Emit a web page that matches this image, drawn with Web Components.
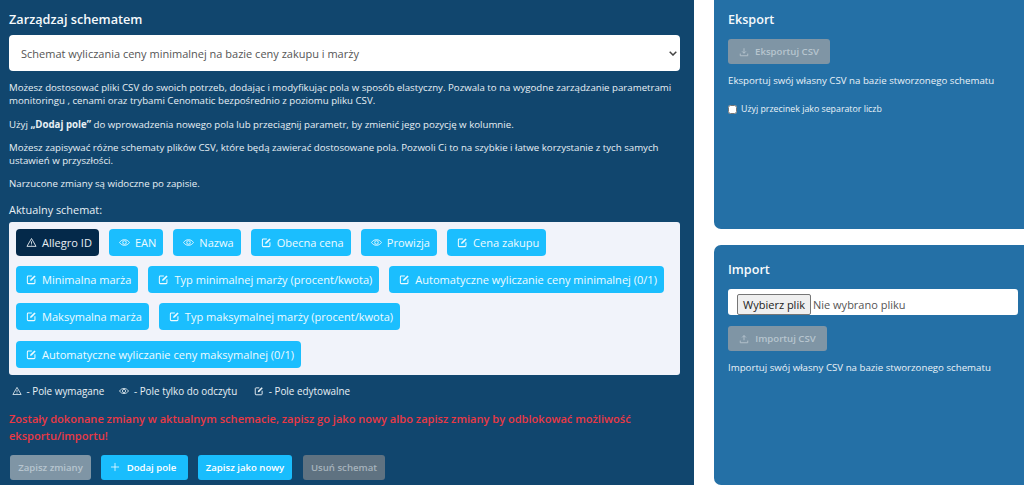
<!DOCTYPE html>
<html lang="pl"><head><meta charset="utf-8"><title>Schemat</title>
<style>
html,body{margin:0;padding:0;height:485px;overflow:hidden;background:#fff;font-family:"Open Sans",sans-serif}
</style></head><body>
<csv-page>
  <manage-panel></manage-panel>
  <div slot="side">
    <side-card heading="Eksport" style="height:229px;border-radius:0 0 0 7px;margin-bottom:16px;padding-top:11px">
      <app-btn kind="disabled" icon="download" style="margin-bottom:10px;--w:102px;--h:25px;--g:6px">Eksportuj CSV</app-btn>
      <side-text>Eksportuj swój własny CSV na bazie stworzonego schematu</side-text>
      <check-line>Użyj przecinek jako separator liczb</check-line>
    </side-card>
    <side-card heading="Import" style="height:240px;border-radius:7px 0 0 7px;padding-top:16px">
      <file-field></file-field>
      <app-btn kind="disabled" icon="upload" style="margin-bottom:10px;--w:99px;--h:25px;--g:6px">Importuj CSV</app-btn>
      <side-text>Importuj swój własny CSV na bazie stworzonego schematu</side-text>
    </side-card>
  </div>
</csv-page>
<script>
const ICONS={
 warn:'<path d="M8 2.2 14.6 13.6H1.4Z" fill="none" stroke="currentColor" stroke-width="1.3" stroke-linejoin="round"/><path d="M8 6.3v3.6M8 11v1.1" stroke="currentColor" stroke-width="1.3"/>',
 eye:'<path d="M.8 8c1.900-2.800 4.300-4.100 7.200-4.100S13.300 5.200 15.200 8c-1.900 2.800-4.300 4.100-7.200 4.100S2.700 10.800.8 8Z" fill="none" stroke="currentColor" stroke-width="1.300"/><circle cx="8" cy="8" r="2.600" fill="none" stroke="currentColor" stroke-width="1.300"/>',
 edit:'<path d="M8.500 3H3.200A1.200 1.200 0 0 0 2 4.200v8.600A1.200 1.200 0 0 0 3.200 14h8.600a1.200 1.200 0 0 0 1.200-1.200V7.500" fill="none" stroke="currentColor" stroke-width="1.500"/><path d="M6 10l.5-2.300L12.300 2 14 3.700 8.300 9.500Z" fill="currentColor"/>',
 plus:'<path d="M8 1.500v13M1.500 8h13" stroke="currentColor" stroke-width="1.200"/>',
 download:'<path d="M8 2v8M5 7l3 3 3-3" fill="none" stroke="currentColor" stroke-width="1.400"/><path d="M2 10.500V14h12v-3.500" fill="none" stroke="currentColor" stroke-width="1.400"/>',
 upload:'<path d="M8 10V2.500M5 5.500l3-3 3 3" fill="none" stroke="currentColor" stroke-width="1.400"/><path d="M2 10.500V14h12v-3.500" fill="none" stroke="currentColor" stroke-width="1.400"/>'
};
const svg=(n,s)=>`<svg width="${s}" height="${s}" viewBox="0 0 16 16" aria-hidden="true">${ICONS[n]}</svg>`;
function def(name,html){customElements.define(name,class extends HTMLElement{connectedCallback(){if(this.shadowRoot)return;this.attachShadow({mode:'open'}).innerHTML=typeof html==='function'?html(this):html;}});}

def('csv-page',`<style>:host{display:grid;grid-template-columns:694px 310px;column-gap:20px;height:485px;overflow:hidden;font-family:"Open Sans",sans-serif}
::slotted([slot=side]){display:flex;flex-direction:column;min-width:0}</style><slot></slot><slot name="side"></slot>`);

def('side-card',h=>`<style>:host{display:block;background:#2470a6;color:#eef5fa;padding:11px 0 0 14px;box-sizing:border-box}
h2{margin:0 0 11px;font-size:12.600px;line-height:17px;font-weight:600;color:#f6fafc}</style><h2>${h.getAttribute('heading')}</h2><slot></slot>`);

def('side-text',`<style>:host{display:block;font-size:9.700px;line-height:14px;color:#eaf2f8}</style><slot></slot>`);

def('check-line',`<style>:host{display:flex;align-items:center;gap:4px;margin-top:15px;font-size:8.800px;line-height:13px;color:#eaf2f8}
input{margin:0;width:9px;height:9px;accent-color:#fff}</style><input type="checkbox"><label><slot></slot></label>`);

def('file-field',`<style>:host{display:flex;align-items:flex-end;width:290px;height:26px;background:#fff;border-radius:3px;margin-bottom:11px;box-sizing:border-box;padding-left:9px;font-size:11px;color:#555;font-family:"Open Sans",sans-serif}
button{font:inherit;color:#222;background:#efefef;border:1px solid #767676;border-radius:2px;height:21px;width:74px;padding:0;margin-right:2px;white-space:nowrap}
span{line-height:21px}</style><button type="button">Wybierz plik</button><span>Nie wybrano pliku</span>`);

def('app-btn',h=>`<style>:host{display:inline-flex;vertical-align:top}
div{display:flex;align-items:center;justify-content:center;gap:var(--g,6px);box-sizing:border-box;height:var(--h,25px);width:var(--w,auto);padding-right:var(--pr,0);border-radius:3px;font-size:9.600px;font-weight:600;white-space:nowrap}
.disabled{background:#7f95a5;color:#b7c5cf}
.primary{background:#19bdfd;color:#fff}
.muted{background:#5f7281;color:#a6b2bc}
svg{flex:none}</style><div class="${h.getAttribute('kind')||'primary'}">${h.getAttribute('icon')?svg(h.getAttribute('icon'),10):''}<slot></slot></div>`);

def('field-chip',h=>`<style>:host{display:inline-flex}
div{display:flex;align-items:center;gap:5px;height:27px;box-sizing:border-box;padding:0 7px 0 10px;border-radius:4px;background:#1bbefe;color:#eefbff;font-size:11.050px;white-space:nowrap}
:host([req]) div{background:#04294a;color:#e8eef3}</style><div>${svg(h.getAttribute('icon'),11)}<slot></slot></div>`);

def('legend-item',h=>`<style>:host{display:inline-flex;align-items:center;gap:4.500px;font-size:9.900px;line-height:13px;color:#e8f0f5}</style>${svg(h.getAttribute('icon'),10)}<slot></slot>`);

const chips=[['warn','Allegro ID'],['eye','EAN'],['eye','Nazwa'],['edit','Obecna cena'],['eye','Prowizja'],['edit','Cena zakupu'],['edit','Minimalna marża'],['edit','Typ minimalnej marży (procent/kwota)'],['edit','Automatyczne wyliczanie ceny minimalnej (0/1)'],['edit','Maksymalna marża'],['edit','Typ maksymalnej marży (procent/kwota)'],['edit','Automatyczne wyliczanie ceny maksymalnej (0/1)']];
const chev="data:image/svg+xml,%3Csvg xmlns='http://www.w3.org/2000/svg' width='8' height='5'%3E%3Cpath d='M.7.7 4 4 7.300.7' fill='none' stroke='%23444' stroke-width='1.500'/%3E%3C/svg%3E";

def('manage-panel',`<style>:host{display:block;background:#11466e;color:#eef3f7;padding:11px 14px 0 9px;box-sizing:border-box;height:485px;overflow:hidden}
h2{margin:0 0 7px;font-size:12.700px;line-height:17px;font-weight:600;color:#f6fafc}
select{display:block;appearance:none;width:671px;height:36px;border:0;border-radius:4px;background:#fff url("${chev}") no-repeat 660px 16px;color:#555;font:11px "Open Sans",sans-serif;padding:0 12px;margin-bottom:10px}
p{margin:0 0 10px;font-size:9.680px;line-height:13.300px;color:#e8f0f5}
p.last{margin-bottom:11.500px}
.lab{font-size:10.900px;line-height:15px;margin:0 0 4.500px;color:#e8f0f5}
.box{display:flex;flex-wrap:wrap;gap:10.300px 10px;background:#f1f3fa;border-radius:3px;padding:7px;width:671px;box-sizing:border-box;height:153px;align-content:flex-start}
.leg{display:flex;margin:10px 0 0 3px}
.leg legend-item:nth-child(1){margin-right:15px}
.leg legend-item:nth-child(2){margin-right:17px}
.err{margin:12px 0 11px;font-size:11.070px;line-height:17px;font-weight:600;color:#e93844}
.acts{display:flex;gap:10px;margin-left:1px}</style>
<h2>Zarządzaj schematem</h2>
<select><option>Schemat wyliczania ceny minimalnej na bazie ceny zakupu i marży</option></select>
<p>Możesz dostosować pliki CSV do swoich potrzeb, dodając i modyfikując pola w sposób elastyczny. Pozwala to na wygodne zarządzanie parametrami monitoringu , cenami oraz trybami Cenomatic bezpośrednio z poziomu pliku CSV.</p>
<p>Użyj <b>„Dodaj pole”</b> do wprowadzenia nowego pola lub przeciągnij parametr, by zmienić jego pozycję w kolumnie.</p>
<p>Możesz zapisywać różne schematy plików CSV, które będą zawierać dostosowane pola. Pozwoli Ci to na szybkie i łatwe korzystanie z tych samych ustawień w przyszłości.</p>
<p class="last">Narzucone zmiany są widoczne po zapisie.</p>
<div class="lab">Aktualny schemat:</div>
<div class="box">${chips.map((c,i)=>`<field-chip icon="${c[0]}"${i==0?' req':''}>${c[1]}</field-chip>`).join('')}</div>
<div class="leg"><legend-item icon="warn">- Pole wymagane</legend-item><legend-item icon="eye">- Pole tylko do odczytu</legend-item><legend-item icon="edit">- Pole edytowalne</legend-item></div>
<div class="err">Zostały dokonane zmiany w aktualnym schemacie, zapisz go jako nowy albo zapisz zmiany by odblokować możliwość eksportu/importu!</div>
<div class="acts"><app-btn kind="disabled" style="--w:81px">Zapisz zmiany</app-btn><app-btn icon="plus" style="--w:87px;--g:7px;--pr:3px">Dodaj pole</app-btn><app-btn style="--w:94px">Zapisz jako nowy</app-btn><app-btn kind="muted" style="--w:82px;margin-left:1px">Usuń schemat</app-btn></div>`);
</script>
</body></html>
